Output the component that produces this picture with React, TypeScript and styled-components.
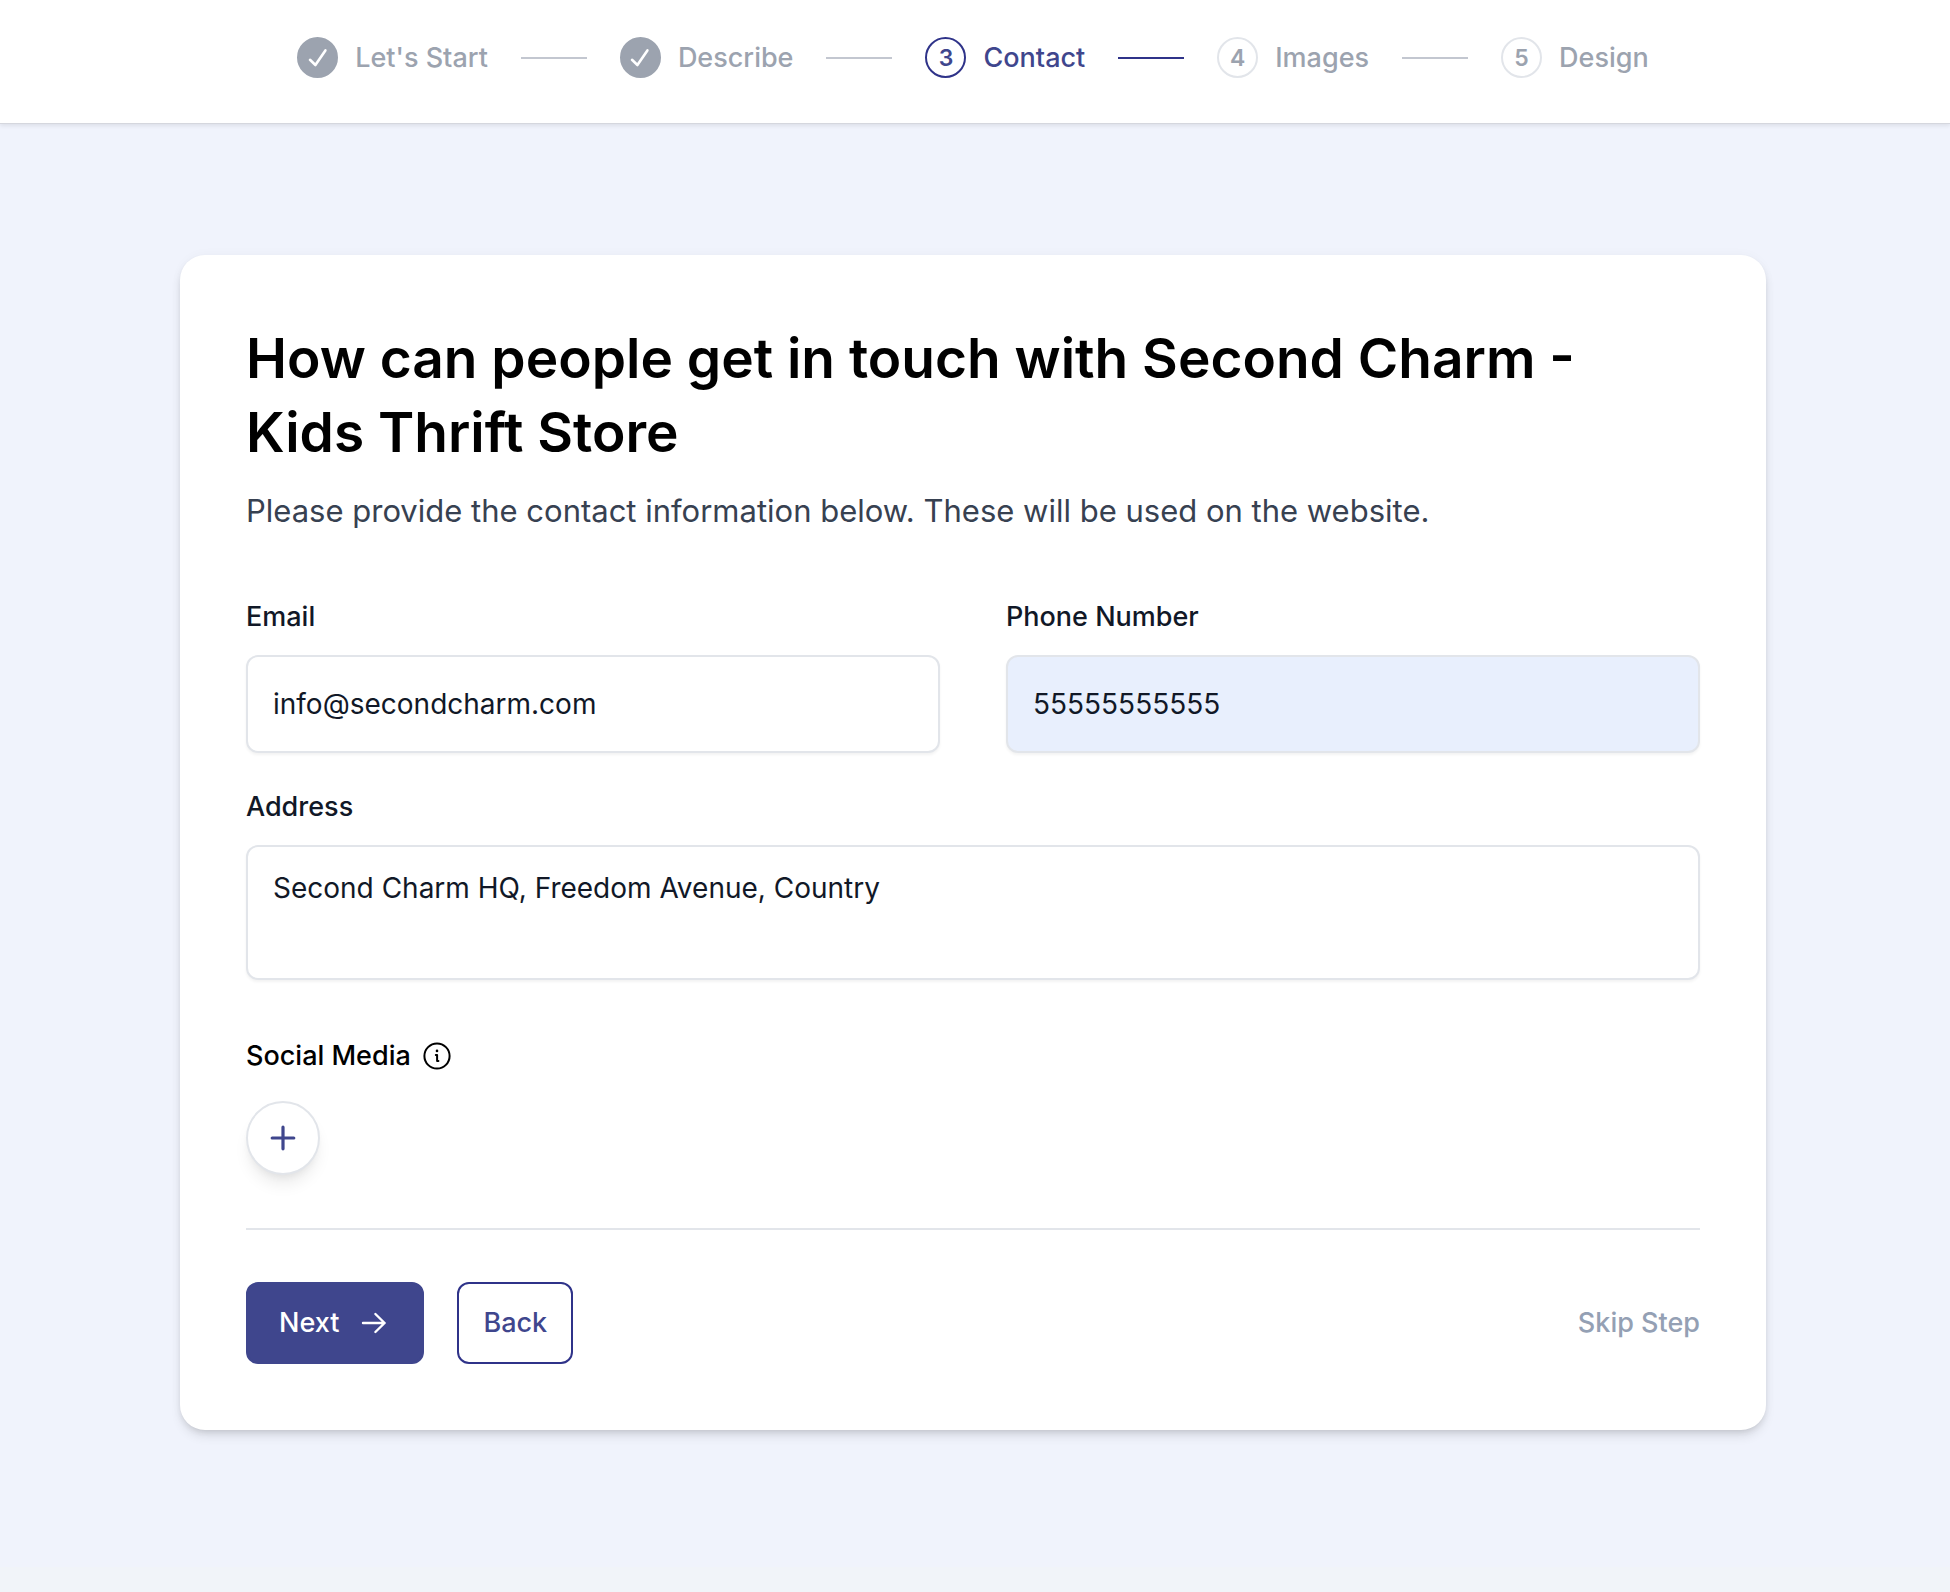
import React, { useState } from "react";
import styled, { createGlobalStyle } from "styled-components";

const color = {
  brand: "#3f468d",
  brandDark: "#2f3389",
  muted: "#9ca3af",
  line: "#e2e5ea",
  ink: "#111827",
};

const GlobalStyle = createGlobalStyle`
  *, *::before, *::after { box-sizing: border-box; }
  body {
    margin: 0;
    background: #f1f4f9;
    color: #000;
    font-family: Inter, "Open Sans", sans-serif;
    font-size: 27px;
    line-height: 40px;
  }
  button, input, textarea { font: inherit; color: inherit; }
`;

const Page = styled.div`
  padding-bottom: 137px;
  background: #f0f3fc;
`;

const Header = styled.header`
  background: #fff;
  padding: 37px 4px 45px 0;
  border-bottom: 1px solid #d5d7de;
  box-shadow: 0 2px 4px rgba(0, 0, 0, 0.08);
`;

const Steps = styled.ol`
  display: flex;
  justify-content: center;
  align-items: center;
  gap: 33px;
  margin: 0;
  padding: 0;
  list-style: none;
`;

type StepState = "done" | "current" | "todo";

const Step = styled.li<{ $state: StepState }>`
  display: flex;
  align-items: center;
  gap: 17px;
  height: 41px;
  font-weight: 500;
  color: ${(p) => (p.$state === "current" ? color.brand : color.muted)};
`;

const StepMark = styled.span<{ $state: StepState }>`
  display: flex;
  align-items: center;
  justify-content: center;
  width: 41px;
  height: 41px;
  border-radius: 50%;
  border: 2px solid
    ${(p) => (p.$state === "done" ? color.muted : p.$state === "current" ? color.brandDark : color.line)};
  background: ${(p) => (p.$state === "done" ? color.muted : "#fff")};
  font-size: 23px;
  font-weight: 600;
`;

const Connector = styled.li<{ $active: boolean }>`
  width: 66px;
  height: 2px;
  background: ${(p) => (p.$active ? color.brandDark : "#c3c7d0")};
`;

const Main = styled.main`
  padding: 131px 184px 0 180px;
`;

const Card = styled.form`
  display: flex;
  flex-direction: column;
  padding: 66px;
  border-radius: 25px;
  background: #fff;
  box-shadow: 0 7px 12px -2px rgba(0, 0, 0, 0.12), 0 3px 7px -3px rgba(0, 0, 0, 0.12), 0 0 12px rgba(0, 0, 0, 0.03);
`;

const Title = styled.h1`
  margin: 0;
  font-size: 55px;
  line-height: 74px;
  font-weight: 600;
`;

const Subtitle = styled.p`
  margin: 19px 0 63px;
  font-size: 31px;
  line-height: 46px;
  color: #374151;
`;

const Fields = styled.div`
  display: grid;
  grid-template-columns: 1fr 1fr;
  gap: 34px 66px;
`;

const Field = styled.div<{ $wide?: boolean }>`
  display: flex;
  flex-direction: column;
  gap: 18px;
  grid-column: ${(p) => (p.$wide ? "1 / -1" : "auto")};
`;

const Label = styled.label`
  font-weight: 500;
  color: ${color.ink};
`;

const Input = styled.input<{ $filled?: boolean }>`
  width: 100%;
  height: 98px;
  padding: 0 25px;
  border: 2px solid ${color.line};
  border-radius: 12px;
  background: ${(p) => (p.$filled ? "#e8effd" : "#fff")};
  color: ${color.ink};
  font-size: 28px;
  box-shadow: 0 2px 3px rgba(0, 0, 0, 0.05);
`;

const TextArea = styled.textarea`
  display: block;
  width: 100%;
  height: 135px;
  padding: 21px 25px;
  border: 2px solid ${color.line};
  border-radius: 12px;
  background: #fff;
  color: ${color.ink};
  font-size: 28px;
  box-shadow: 0 2px 3px rgba(0, 0, 0, 0.05);
  resize: none;
`;

const SocialHeading = styled.h2`
  display: flex;
  align-items: center;
  gap: 12px;
  margin: 56px 0 25px;
  font-size: 27px;
  line-height: 40px;
  font-weight: 500;
`;

const AddButton = styled.button`
  display: flex;
  align-items: center;
  justify-content: center;
  width: 74px;
  height: 74px;
  padding: 0;
  border: 2px solid ${color.line};
  border-radius: 50%;
  background: #fff;
  color: ${color.brand};
  box-shadow: 0 12px 16px -3px rgba(0, 0, 0, 0.08), 0 5px 8px -4px rgba(0, 0, 0, 0.07);
  cursor: pointer;
`;

const Divider = styled.hr`
  width: 100%;
  height: 2px;
  margin: 53px 0 52px;
  border: 0;
  background: ${color.line};
`;

const Actions = styled.div`
  display: flex;
  align-items: center;
  gap: 33px;
`;

const ActionButton = styled.button<{ $primary?: boolean }>`
  display: flex;
  align-items: center;
  gap: 19px;
  height: 82px;
  padding: 0 ${(p) => (p.$primary ? 31 : 24)}px;
  border: 2px solid ${(p) => (p.$primary ? color.brand : color.brandDark)};
  border-radius: 12px;
  background: ${(p) => (p.$primary ? color.brand : "#fff")};
  color: ${(p) => (p.$primary ? "#fff" : color.brand)};
  font-weight: 500;
  cursor: pointer;
`;

const SkipLink = styled.a`
  margin-left: auto;
  color: #94a0b4;
  font-weight: 500;
  text-decoration: none;
`;

const CheckIcon = () => (
  <svg width="20" height="22" viewBox="0 0 20 22" fill="none" stroke="#fff" strokeWidth="2.6" strokeLinecap="round" strokeLinejoin="round" aria-hidden="true">
    <path d="M2 12.8 7.4 18 17.4 3.4" />
  </svg>
);

const InfoIcon = () => (
  <svg width="28" height="28" viewBox="0 0 28 28" fill="none" stroke="currentColor" strokeWidth="2" strokeLinecap="round" strokeLinejoin="round" aria-hidden="true">
    <circle cx="14" cy="14" r="12.6" />
    <path d="M12.8 12.9h1.3v6.2h1.3" />
    <circle cx="14" cy="8.9" r="1.3" fill="currentColor" stroke="none" />
  </svg>
);

const PlusIcon = () => (
  <svg width="26" height="26" viewBox="0 0 26 26" fill="none" stroke="currentColor" strokeWidth="3.2" strokeLinecap="round" aria-hidden="true">
    <path d="M13 2.2v21.6M2.2 13h21.6" />
  </svg>
);

const ArrowIcon = () => (
  <svg width="33" height="22" viewBox="0 0 33 22" fill="none" stroke="currentColor" strokeWidth="2.4" strokeLinecap="round" strokeLinejoin="round" aria-hidden="true">
    <path d="M5 11h21.6M17.4 2l9.2 9-9.2 9" />
  </svg>
);

const steps: { name: string; state: StepState }[] = [
  { name: "Let's Start", state: "done" },
  { name: "Describe", state: "done" },
  { name: "Contact", state: "current" },
  { name: "Images", state: "todo" },
  { name: "Design", state: "todo" },
];

export default function App() {
  const [email, setEmail] = useState("info@secondcharm.com");
  const [phone, setPhone] = useState("55555555555");
  const [address, setAddress] = useState("Second Charm HQ, Freedom Avenue, Country");

  return (
    <Page>
      <GlobalStyle />
      <Header>
        <Steps>
          {steps.map((step, i) => (
            <React.Fragment key={step.name}>
              <Step $state={step.state} aria-current={step.state === "current" ? "step" : undefined}>
                <StepMark $state={step.state}>{step.state === "done" ? <CheckIcon /> : i + 1}</StepMark>
                <span>{step.name}</span>
              </Step>
              {i < steps.length - 1 && <Connector $active={step.state === "current"} aria-hidden="true" />}
            </React.Fragment>
          ))}
        </Steps>
      </Header>
      <Main>
        <Card onSubmit={(e) => e.preventDefault()}>
          <Title>How can people get in touch with Second Charm - Kids Thrift Store</Title>
          <Subtitle>Please provide the contact information below. These will be used on the website.</Subtitle>
          <Fields>
            <Field>
              <Label htmlFor="email">Email</Label>
              <Input id="email" type="email" value={email} onChange={(e) => setEmail(e.target.value)} />
            </Field>
            <Field>
              <Label htmlFor="phone">Phone Number</Label>
              <Input id="phone" type="tel" $filled value={phone} onChange={(e) => setPhone(e.target.value)} />
            </Field>
            <Field $wide>
              <Label htmlFor="address">Address</Label>
              <TextArea id="address" value={address} onChange={(e) => setAddress(e.target.value)} />
            </Field>
          </Fields>
          <SocialHeading>
            Social Media
            <InfoIcon />
          </SocialHeading>
          <AddButton type="button" aria-label="Add social media">
            <PlusIcon />
          </AddButton>
          <Divider />
          <Actions>
            <ActionButton type="submit" $primary>
              Next
              <ArrowIcon />
            </ActionButton>
            <ActionButton type="button">Back</ActionButton>
            <SkipLink href="#skip">Skip Step</SkipLink>
          </Actions>
        </Card>
      </Main>
    </Page>
  );
}
